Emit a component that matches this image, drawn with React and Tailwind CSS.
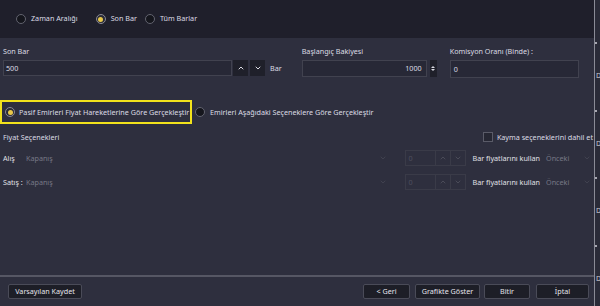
import { ChevronUp, ChevronDown } from "lucide-react";

const font = { fontFamily: '"Noto Sans", "DejaVu Sans", sans-serif' };

// small radio dot
const Radio = ({ on }) => (
  <span
    className={
      "inline-flex h-[10px] w-[10px] shrink-0 items-center justify-center rounded-full border " +
      (on ? "border-[#8a8a95] bg-[#2a2b36]" : "border-[#62636f] bg-[#15161d]")
    }
  >
    {on && <span className="h-[5px] w-[5px] rounded-full bg-[#e8c84a]" />}
  </span>
);

const SpinBtn = ({ up, dim }) => (
  <span
    className={
      "flex h-full w-[15px] items-center justify-center border-l " +
      (dim ? "border-[#3a3b48] text-[#4a4b58]" : "border-[#3d3e4c] bg-[#22232e] text-[#d8d8e0]")
    }
  >
    {up ? <ChevronUp size={8} strokeWidth={3} /> : <ChevronDown size={8} strokeWidth={3} />}
  </span>
);

const PriceRow = ({ label }) => (
  <div className="flex h-[16px] items-center">
    <span className="w-[23px] pl-[3px] text-[#e0e0e6]">{label}</span>
    <div className="flex h-full w-[368px] items-center justify-between pl-[3px] pr-[4px]">
      <span className="text-[#777886]">Kapanış</span>
      <ChevronDown size={8} className="text-[#4a4b58]" />
    </div>
    <div className="ml-[14px] flex h-full w-[61px] items-center border border-[#3a3b48]">
      <span className="flex-1 pl-[3px] text-[#4e4f5e]">0</span>
      <SpinBtn up dim />
      <SpinBtn dim />
    </div>
    <span className="ml-[7px] text-[#e0e0e6]">Bar fiyatlarını kullan</span>
    <div className="ml-[6px] flex h-full w-[48px] items-center justify-between pr-[3px]">
      <span className="text-[#777886]">Önceki</span>
      <ChevronDown size={8} className="text-[#4a4b58]" />
    </div>
  </div>
);

const Btn = ({ children, w }) => (
  <button
    className={
      "flex h-[15px] items-center justify-center rounded-[2px] border border-[#4a4b58] bg-[#1d1e27] text-[#e4e4ea] " +
      w
    }
  >
    {children}
  </button>
);

const EdgeMark = () => (
  <div className="flex h-[74px] flex-col items-end">
    <span className="mt-[6px] mr-[4px] h-[2px] w-[2px] rounded-full bg-[#d0d0d8]" />
    <span className="mt-[28px]">D</span>
  </div>
);

export default function App() {
  return (
    <div
      className="flex h-[306px] w-[600px] overflow-hidden whitespace-nowrap bg-[#2e2f3e] text-[7.2px] leading-none text-[#dcdce4]"
      style={font}
    >
      <div className="flex w-[594px] flex-col">
        {/* top option panel */}
        <div className="flex h-[38px] items-center gap-[5px] bg-[#1f1f2b] pl-[16px]">
          <Radio />
          <span className="mr-[13px]">Zaman Aralığı</span>
          <Radio on />
          <span className="mr-[3px]">Son Bar</span>
          <Radio />
          <span>Tüm Barlar</span>
        </div>

        {/* inputs */}
        <div className="mt-[10px] flex pl-[3px]">
          <div className="flex flex-col gap-[5px]">
            <span>Son Bar</span>
            <div className="flex h-[16px] items-center">
              <div className="flex h-full w-[229px] items-center border border-[#41424f] bg-[#272836] pl-[2px]">
                500
              </div>
              <span className="ml-[1px] flex h-full w-[15px] items-center justify-center bg-[#1f202a]">
                <ChevronUp size={8} strokeWidth={3} />
              </span>
              <span className="ml-[2px] flex h-full w-[15px] items-center justify-center bg-[#1f202a]">
                <ChevronDown size={8} strokeWidth={3} />
              </span>
              <span className="ml-[5px]">Bar</span>
            </div>
          </div>

          <div className="ml-[20px] flex flex-col gap-[5px]">
            <span>Başlangıç Bakiyesi</span>
            <div className="flex h-[17px] items-center">
              <div className="flex h-full w-[125px] items-center justify-end border border-[#41424f] bg-[#272836] pr-[4px]">
                1000
              </div>
              <span className="ml-[3px] flex h-full w-[7px] flex-col items-center justify-center gap-[1px] bg-[#1f202a]">
                <span className="h-0 w-0 border-x-[2px] border-b-[2px] border-x-transparent border-b-[#d8d8e0]" />
                <span className="h-0 w-0 border-x-[2px] border-t-[2px] border-x-transparent border-t-[#d8d8e0]" />
              </span>
            </div>
          </div>

          <div className="ml-[13px] flex flex-col gap-[5px]">
            <span>Komisyon Oranı (Binde) :</span>
            <div className="flex h-[18px] w-[129px] items-center border border-[#41424f] bg-[#272836] pl-[3px]">
              0
            </div>
          </div>
        </div>

        {/* execution mode */}
        <div className="mt-[22px] flex items-center">
          <div className="flex h-[24px] w-[192px] items-center gap-[4px] border-2 border-[#f2e21c] pl-[3px]">
            <Radio on />
            <span>Pasif Emirleri Fiyat Hareketlerine Göre Gerçekleştir</span>
          </div>
          <span className="ml-[3px] mr-[5px]">
            <Radio />
          </span>
          <span>Emirleri Aşağıdaki Seçeneklere Göre Gerçekleştir</span>
        </div>

        {/* price options */}
        <div className="mt-[8px] flex items-center justify-between pl-[3px] pr-[1px]">
          <span>Fiyat Seçenekleri</span>
          <div className="flex items-center gap-[4px]">
            <span className="h-[10px] w-[10px] border border-[#5a5b68] bg-[#262733]" />
            <span>Kayma seçeneklerini dahil et</span>
          </div>
        </div>
        <div className="mt-[8px] flex flex-col gap-[8px]">
          <PriceRow label="Alış" />
          <PriceRow label="Satış :" />
        </div>

        <div className="flex-1" />

        {/* footer */}
        <div className="h-[2px] bg-[#565764]" />
        <div className="flex h-[29px] items-center pl-[8px] pr-[5px]">
          <Btn w="w-[74px]">Varsayılan Kaydet</Btn>
          <div className="flex-1" />
          <div className="flex">
            <Btn w="w-[47px]">&lt; Geri</Btn>
            <span className="w-[5px]" />
            <Btn w="w-[65px]">Grafikte Göster</Btn>
            <span className="w-[4px]" />
            <Btn w="w-[46px]">Bitir</Btn>
            <span className="w-[6px]" />
            <Btn w="w-[53px]">İptal</Btn>
          </div>
        </div>
      </div>

      {/* edge of neighbouring pane */}
      <div className="flex flex-1 flex-col items-end border-l border-[#8a8b96] bg-[#2a2b38] pt-[36px] text-[7px] text-[#cfcfd6]">
        <EdgeMark />
        <EdgeMark />
        <EdgeMark />
        <EdgeMark />
      </div>
    </div>
  );
}
